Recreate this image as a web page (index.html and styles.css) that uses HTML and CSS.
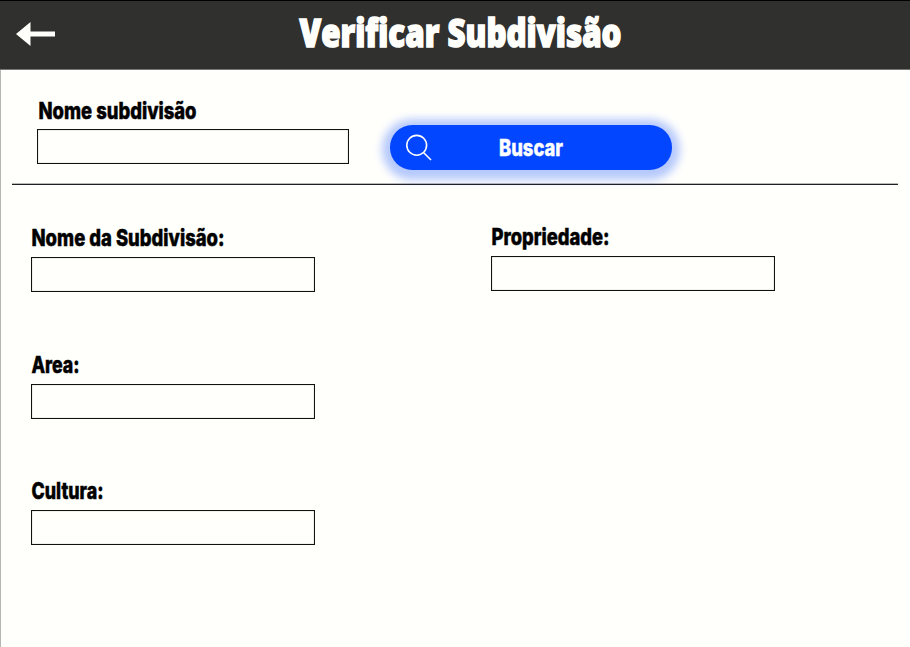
FILE: index.html
```html
<!DOCTYPE html>
<html lang="pt-BR">
<head>
<meta charset="utf-8">
<title>Verificar Subdivisão</title>
<link rel="stylesheet" href="styles.css">
</head>
<body>
<div class="window">
  <header class="header">
    <svg class="back" width="39" height="24" viewBox="0 0 39 24"><path d="M0 12L14.5 0V9.5H39V14.5H14.5V24Z"/></svg>
    <h1 class="heading"><svg width="330" height="50"><text x="0.5" y="36.5" textLength="322" lengthAdjust="spacingAndGlyphs">Verificar Subdivisão</text></svg></h1>
  </header>
  <main class="content">
    <form class="search">
      <label class="field">
        <svg class="caption" width="200" height="28"><text x="1.5" y="18" textLength="158" lengthAdjust="spacingAndGlyphs">Nome subdivisão</text></svg>
        <input class="box" type="text">
      </label>
      <button class="button" type="button">
        <svg class="lens" width="28" height="28" viewBox="0 0 28 28"><circle cx="11.7" cy="11.3" r="9.9"/><path d="M18.5 18.5L26 26"/></svg>
        <svg class="action" width="70" height="28"><text x="1" y="20" textLength="64" lengthAdjust="spacingAndGlyphs">Buscar</text></svg>
      </button>
    </form>
    <div class="details">
      <div class="column">
        <label class="field">
          <svg class="caption" width="220" height="28"><text x="0.5" y="17" textLength="193" lengthAdjust="spacingAndGlyphs">Nome da Subdivisão:</text></svg>
          <input class="box" type="text">
        </label>
        <label class="field">
          <svg class="caption" width="220" height="28"><text x="0.5" y="17" textLength="48" lengthAdjust="spacingAndGlyphs">Area:</text></svg>
          <input class="box" type="text">
        </label>
        <label class="field">
          <svg class="caption" width="220" height="28"><text x="0.5" y="17" textLength="72" lengthAdjust="spacingAndGlyphs">Cultura:</text></svg>
          <input class="box" type="text">
        </label>
      </div>
      <div class="column column-right">
        <label class="field">
          <svg class="caption" width="220" height="28"><text x="0.5" y="17" textLength="118" lengthAdjust="spacingAndGlyphs">Propriedade:</text></svg>
          <input class="box" type="text">
        </label>
      </div>
    </div>
  </main>
</div>
</body>
</html>
```
FILE: styles.css
```css
* { box-sizing: border-box; }
body { margin: 0; background: #fffffc; }
svg { display: block; overflow: visible; }
.window { height: 647px; overflow: hidden; }
.header {
  display: flex;
  height: 70px;
  background: #30302e;
  border-top: 1px solid #000;
  border-bottom: 1px solid #777775;
}
.content { height: 577px; border-left: 1px solid #b5b5b3; }
.back { margin: 21px 0 0 16px; fill: #fffffc; }
.heading { margin: 9px 0 0 244px; }
.heading text {
  font: 800 38.5px "Open Sans", sans-serif;
  fill: #fffffc;
  stroke: #fffffc;
  stroke-width: 1.6px;
}
.search {
  display: flex;
  height: 115px;
  margin: 0 12px 0 11px;
  padding: 31px 0 0 25px;
  border-bottom: 1px solid #202024;
  box-shadow: inset 0 -.5px 0 #77777a;
}
.field { display: block; width: 284px; }
.search .field { width: 312px; }
.caption text {
  font: 800 23px Inter, sans-serif;
  fill: #000;
  stroke: #000;
  stroke-width: .5px;
}
.box {
  display: block;
  width: 100%;
  height: 35px;
  margin: 0;
  padding: 0 8px;
  border: 1px solid #111;
  border-radius: 0;
  background: #fffffc;
  box-shadow: inset 0 0 1px rgba(0, 0, 0, .6);
  font: 18px Inter, sans-serif;
}
.button {
  display: flex;
  width: 282px;
  height: 44.5px;
  margin: 24px 0 0 41px;
  padding: 0;
  border: 0;
  border-radius: 22.25px;
  background: #0346ff;
  box-shadow: 0 2px 9px 8px rgba(3, 70, 255, .29);
}
.lens { margin: 9px 0 0 15px; fill: none; stroke: #fff; stroke-width: 1.6px; }
.action { margin: 10.5px 0 0 65px; }
.action text {
  font: 800 23px Inter, sans-serif;
  fill: #fff;
  stroke: #fff;
  stroke-width: .4px;
}
.details { display: flex; gap: 176px; padding: 44px 0 0 30px; }
.column { display: flex; flex-direction: column; gap: 63.5px; }
.column-right { margin-top: -1px; }
```
